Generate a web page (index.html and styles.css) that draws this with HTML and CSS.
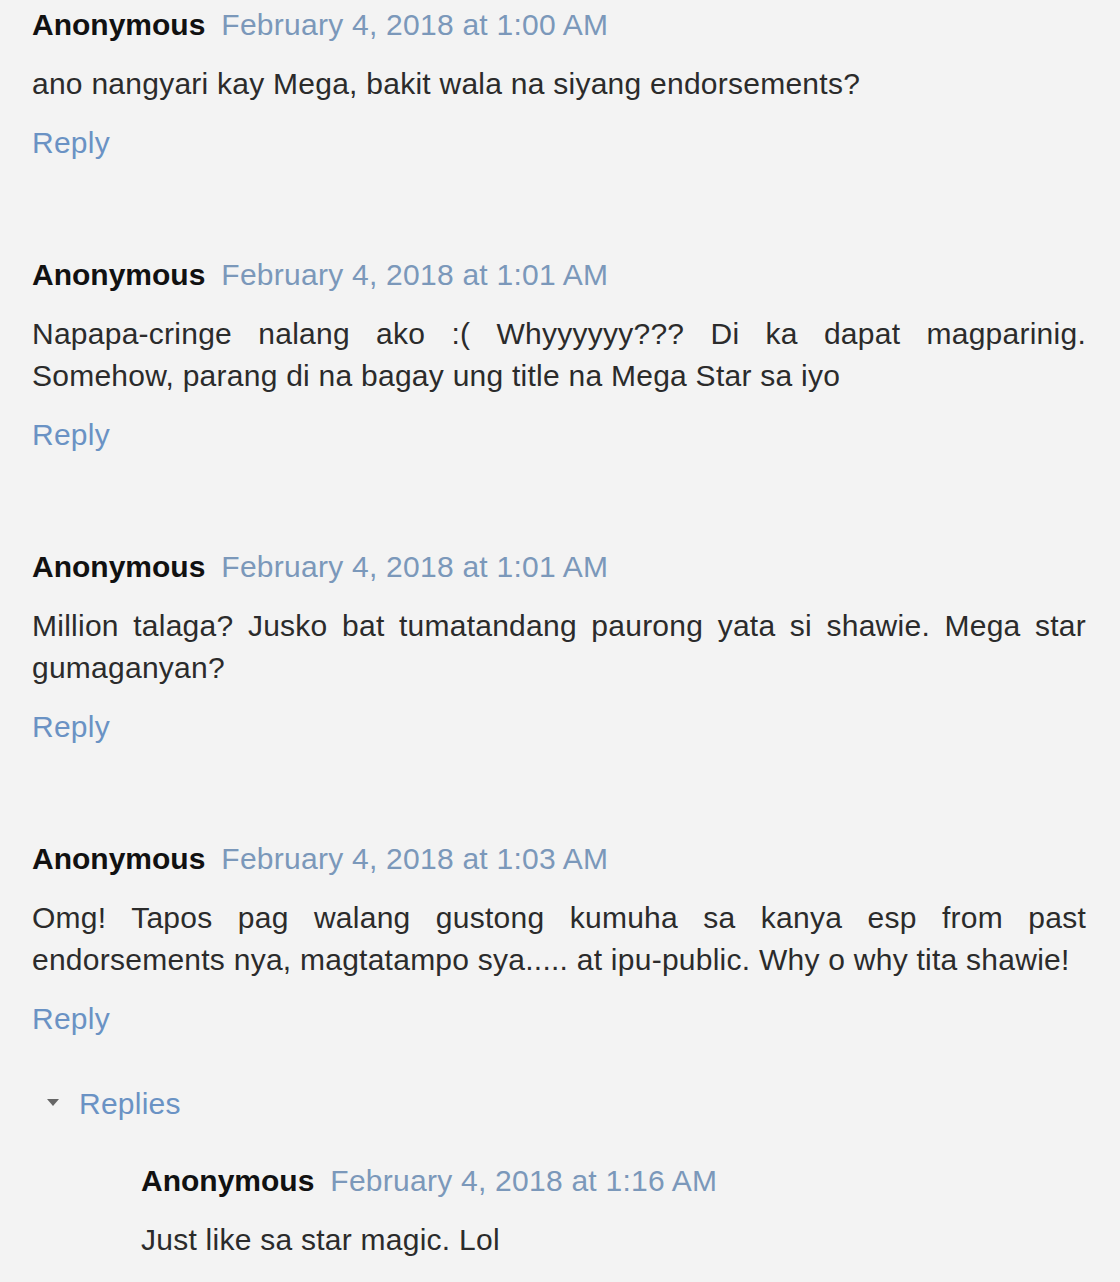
FILE: index.html
```html
<!DOCTYPE html>
<html lang="tl">
<head>
    <meta charset="UTF-8">
    <title>Comments</title>
    <link rel="stylesheet" href="styles.css">
</head>
<body>

    <!-- Lista dei commenti -->
    <div class="comments">

        <div class="comment">
            <div class="comment-header">
                <span class="user">Anonymous</span>
                <a class="date" href="#">February 4, 2018 at 1:00 AM</a>
            </div>
            <p class="comment-body">ano nangyari kay Mega, bakit wala na siyang endorsements?</p>
            <a class="reply" href="#">Reply</a>
        </div>

        <div class="comment">
            <div class="comment-header">
                <span class="user">Anonymous</span>
                <a class="date" href="#">February 4, 2018 at 1:01 AM</a>
            </div>
            <p class="comment-body">Napapa-cringe nalang ako :( Whyyyyyy??? Di ka dapat magparinig. Somehow, parang di na bagay ung title na Mega Star sa iyo</p>
            <a class="reply" href="#">Reply</a>
        </div>

        <div class="comment">
            <div class="comment-header">
                <span class="user">Anonymous</span>
                <a class="date" href="#">February 4, 2018 at 1:01 AM</a>
            </div>
            <p class="comment-body">Million talaga? Jusko bat tumatandang paurong yata si shawie. Mega star gumaganyan?</p>
            <a class="reply" href="#">Reply</a>
        </div>

        <div class="comment last">
            <div class="comment-header">
                <span class="user">Anonymous</span>
                <a class="date" href="#">February 4, 2018 at 1:03 AM</a>
            </div>
            <p class="comment-body">Omg! Tapos pag walang gustong kumuha sa kanya esp from past endorsements nya, magtatampo sya..... at ipu-public. Why o why tita shawie!</p>
            <a class="reply" href="#">Reply</a>

            <!-- Risposte -->
            <div class="replies">
                <div class="replies-toggle">
                    <span class="arrow"></span>
                    <a href="#">Replies</a>
                </div>
                <div class="comment nested">
                    <div class="comment-header">
                        <span class="user">Anonymous</span>
                        <a class="date" href="#">February 4, 2018 at 1:16 AM</a>
                    </div>
                    <p class="comment-body">Just like sa star magic. Lol</p>
                </div>
            </div>
        </div>

    </div>

</body>
</html>
```

FILE: styles.css
```css
body {
    font-family: 'Liberation Sans', Arial, sans-serif;
    background-color: #f3f3f3;
    color: #2b2b2b;
    margin: 0;
    padding: 0;
}
.comments {
    padding: 4px 34px 0 32px;
}
.comment {
    font-size: 30px;
    line-height: 42px;
    letter-spacing: 0.25px;
    padding-bottom: 90px;
}
.comment.last {
    padding-bottom: 0;
}
.comment-header {
    display: flex;
    gap: 16px;
}
.user {
    font-weight: bold;
    color: #111;
    letter-spacing: 0;
}
.date {
    color: #7b98ba;
    text-decoration: none;
}
.comment-body {
    margin: 17px 0;
    text-align: justify;
}
.reply {
    color: #6a92c4;
    text-decoration: none;
}
.replies {
    margin-top: 43px;
}
.replies-toggle {
    display: flex;
    align-items: center;
    gap: 20px;
    padding-left: 15px;
}
.replies-toggle a {
    color: #6a92c4;
    text-decoration: none;
}
.arrow {
    width: 0;
    height: 0;
    border-left: 6px solid transparent;
    border-right: 6px solid transparent;
    border-top: 7px solid #666;
    margin-top: -4px;
}
.comment.nested {
    margin-top: 35px;
    padding-left: 109px;
    padding-bottom: 0;
}
```
